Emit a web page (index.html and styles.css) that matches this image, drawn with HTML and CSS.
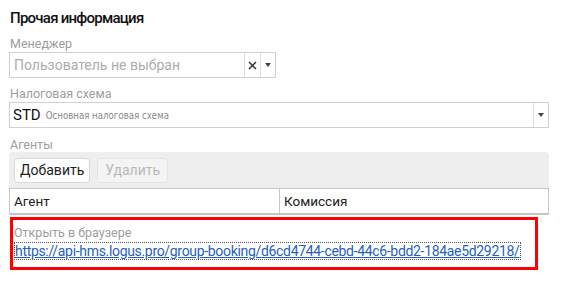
FILE: index.html
```html
<!DOCTYPE html>
<html>
<head>
<meta charset="utf-8">
<link rel="stylesheet" href="styles.css">
</head>
<body>
<div class="panel">
  <h2 class="title">Прочая информация</h2>

  <div class="field">
    <div class="label">Менеджер</div>
    <div class="select manager">
      <div class="value placeholder">Пользователь не выбран</div>
      <div class="btn-cell clear">
        <svg width="9" height="9" viewBox="0 0 9 9"><path d="M1 1L8 8M8 1L1 8" stroke="#333" stroke-width="1.5"/></svg>
      </div>
      <div class="btn-cell caret"><span class="tri"></span></div>
    </div>
  </div>

  <div class="field">
    <div class="label">Налоговая схема</div>
    <div class="select tax">
      <div class="value"><span class="code">STD</span><span class="desc">Основная налоговая схема</span></div>
      <div class="btn-cell caret"><span class="tri"></span></div>
    </div>
  </div>

  <div class="field">
    <div class="label agents-label">Агенты</div>
    <div class="toolbar">
      <button class="tbtn">Добавить</button>
      <button class="tbtn disabled">Удалить</button>
    </div>
    <div class="thead">
      <div class="th">Агент</div>
      <div class="th">Комиссия</div>
    </div>
  </div>

  <div class="highlight">
    <div class="label open-label">Открыть в браузере</div>
    <a class="link" href="#">https://api-hms.logus.pro/group-booking/d6cd4744-cebd-44c6-bdd2-184ae5d29218/</a>
  </div>
</div>
</body>
</html>
```

FILE: styles.css
```css
html, body {
  margin: 0;
  padding: 0;
  background: #fff;
}
body {
  font-family: Roboto, "Noto Sans", sans-serif;
  color: #222;
}
.panel {
  width: 540px;
  padding: 8px 0 0 9px;
}
.title {
  margin: 0 0 0 1px;
  font-size: 15px;
  font-weight: 500;
  letter-spacing: -0.75px;
  line-height: 20px;
  color: #111;
}
.field {
  display: flex;
  flex-direction: column;
}
.label {
  font-size: 12.5px;
  line-height: 16px;
  color: #9d9d9d;
  margin-top: 8px;
  margin-bottom: 0;
  padding-left: 1px;
}
.select {
  display: flex;
  height: 24px;
  border: 1px solid #d0d0d0;
  box-sizing: content-box;
}
.manager {
  width: 265px;
}
.tax {
  width: 538px;
}
.value {
  flex: 1;
  display: flex;
  align-items: center;
  padding-left: 4px;
  font-size: 14px;
  white-space: nowrap;
  overflow: hidden;
}
.placeholder {
  color: #acacac;
}
.tax .value {
  padding-left: 3px;
}
.code {
  color: #111;
  font-size: 15px;
  margin-right: 5px;
}
.desc {
  font-family: "DejaVu Sans Condensed", "DejaVu Sans", sans-serif;
  font-stretch: condensed;
  font-size: 9.6px;
  color: #888;
}
.btn-cell {
  display: flex;
  align-items: center;
  justify-content: center;
  border-left: 1px solid #dcdcdc;
}
.clear {
  width: 15px;
}
.caret {
  width: 14px;
}
.tri {
  width: 0;
  height: 0;
  border-left: 3.5px solid transparent;
  border-right: 3.5px solid transparent;
  border-top: 4px solid #444;
}
.agents-label {
  margin-top: 10px;
  line-height: 14px;
}
.toolbar {
  display: flex;
  gap: 7px;
  background: #eeeeee;
  width: 530px;
  padding: 6px 5px 5px 5px;
  border-radius: 4px 4px 0 0;
}
.tbtn {
  font-family: inherit;
  font-size: 14px;
  height: 25px;
  padding: 0 5px;
  border: 1px solid #d8d8d8;
  border-radius: 4px;
  background: #fff;
  color: #222;
  line-height: 23px;
}
.tbtn.disabled {
  background: #f4f4f4;
  color: #b9b9b9;
  border-color: #e4e4e4;
  padding: 0 7px;
}
.thead {
  display: grid;
  grid-template-columns: 269px 1fr;
  width: 538px;
  height: 24px;
  border: 1px solid #c8c8c8;
  border-bottom: 2px solid #c4c4c4;
  background: #fff;
}
.th {
  font-size: 13.5px;
  line-height: 24px;
  padding-left: 4px;
  color: #222;
}
.th + .th {
  border-left: 1px solid #c8c8c8;
}
.highlight {
  width: 522px;
  margin-top: 2px;
  margin-left: 1px;
  border: 3px solid #ff0000;
  padding: 5px 0 7px 0;
}
.open-label {
  margin: 0;
  line-height: 16px;
}
.link {
  display: inline-block;
  margin-left: 2px;
  margin-top: 1px;
  font-size: 14px;
  line-height: 16px;
  letter-spacing: -0.32px;
  color: #1f5fbf;
  text-decoration: underline;
  outline: 1px dotted #555;
  white-space: nowrap;
}
```
